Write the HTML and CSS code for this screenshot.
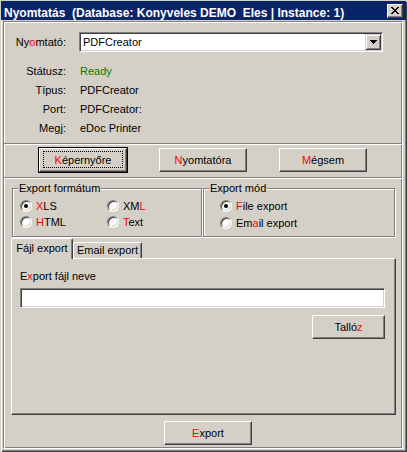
FILE: index.html
```html
<!DOCTYPE html>
<html>
<head>
<meta charset="utf-8">
<link rel="stylesheet" href="styles.css">
</head>
<body>
<div class="window">
  <div class="titlebar">
    <span class="title">Nyomtatás  (Database: Konyveles DEMO  Eles | Instance: 1)</span>
    <span class="close"><svg width="8" height="7" viewBox="0 0 8 7"><path d="M0 0h2v1H0zM6 0h2v1H6zM1 1h2v1H1zM5 1h2v1H5zM2 2h4v1H2zM3 3h2v1H3zM2 4h4v1H2zM1 5h2v1H1zM5 5h2v1H5zM0 6h2v1H0zM6 6h2v1H6z" fill="#000"/></svg></span>
  </div>
  <div class="client">
    <div class="top">
      <div class="printer-row">
        <span class="lbl">Ny<span class="u">o</span>mtató:</span>
        <div class="combo">
          <span class="combo-text">PDFCreator</span>
          <span class="dd"><svg width="7" height="4" viewBox="0 0 7 4"><path d="M0 0h7v1H0zM1 1h5v1H1zM2 2h3v1H2zM3 3h1v1H3z" fill="#000"/></svg></span>
        </div>
      </div>
      <div class="info">
        <span class="lbl">Státusz:</span><span class="ready">Ready</span>
        <span class="lbl">Típus:</span><span>PDFCreator</span>
        <span class="lbl">Port:</span><span>PDFCreator:</span>
        <span class="lbl">Megj:</span><span>eDoc Printer</span>
      </div>
    </div>
    <div class="sep"></div>
    <div class="buttons">
      <div class="btn default"><span class="u">K</span>épernyőre</div>
      <div class="btn"><span class="u">N</span>yomtatóra</div>
      <div class="btn"><span class="u">M</span>égsem</div>
    </div>
    <div class="sep"></div>
    <div class="lower">
      <div class="groups">
        <div class="group g1">
          <span class="legend">Export formátum</span>
          <div class="radios1">
            <div class="opt"><span class="radio on"></span><span><span class="u">X</span>LS</span></div>
            <div class="opt"><span class="radio"></span><span>XM<span class="u">L</span></span></div>
            <div class="opt"><span class="radio"></span><span><span class="u">H</span>TML</span></div>
            <div class="opt"><span class="radio"></span><span><span class="u">T</span>ext</span></div>
          </div>
        </div>
        <div class="group g2">
          <span class="legend">Export mód</span>
          <div class="radios2">
            <div class="opt"><span class="radio on"></span><span><span class="u">F</span>ile export</span></div>
            <div class="opt"><span class="radio"></span><span>Em<span class="u">a</span>il export</span></div>
          </div>
        </div>
      </div>
      <div class="tabrow">
        <div class="tab sel">Fájl export</div>
        <div class="tab t2">Email export</div>
      </div>
      <div class="panel">
        <div class="flabel">E<span class="u">x</span>port fájl neve</div>
        <div class="input"></div>
        <div class="btn browse">Talló<span class="u">z</span></div>
      </div>
      <div class="footer">
        <div class="btn"><span class="u">E</span>xport</div>
      </div>
    </div>
  </div>
</div>
</body>
</html>
```

FILE: styles.css
```css
* { box-sizing: border-box; }
html, body { margin: 0; padding: 0; }
body {
  width: 407px;
  height: 452px;
  overflow: hidden;
  background: #d4d0c8;
  font-family: "Liberation Sans", Arial, sans-serif;
  font-size: 11px;
  color: #000;
}
.u { color: #ff0000; }

.window {
  width: 407px;
  height: 452px;
  padding: 1px;
  background: #d4d0c8;
  box-shadow: inset 1px 1px 0 #d4d0c8, inset 2px 2px 0 #fff, inset -1px -1px 0 #404040, inset -2px -2px 0 #808080;
  display: flex;
  flex-direction: column;
}

.titlebar {
  height: 19px;
  flex: none;
  background: #0a246a;
  color: #fff;
  display: flex;
  align-items: center;
  justify-content: space-between;
  padding: 0 3px 0 3px;
}
.title {
  font-weight: bold;
  font-size: 12px;
  white-space: pre;
  padding-top: 4px;
  line-height: 14px;
}
.close {
  width: 16px;
  height: 14px;
  background: #d4d0c8;
  border: 1px solid;
  border-color: #fff #404040 #404040 #fff;
  box-shadow: inset -1px -1px 0 #808080;
  display: flex;
  align-items: center;
  justify-content: center;
}

.client {
  margin: 1px 3px 0 2px;
  height: 428px;
  flex: none;
  border: 1px solid;
  border-color: #808080 #fff #fff #808080;
  box-shadow: inset 1px 1px 0 #fff, inset -1px -1px 0 #808080;
  display: flex;
  flex-direction: column;
}

.top { padding: 10px 0 5px 0; }
.printer-row { display: flex; align-items: center; height: 20px; }
.lbl { width: 62px; text-align: right; }
.combo {
  margin-left: 13px;
  width: 304px;
  height: 20px;
  background: #fff;
  border: 1px solid;
  border-color: #808080 #fff #fff #808080;
  box-shadow: inset 1px 1px 0 #404040, inset -1px -1px 0 #d4d0c8;
  padding: 1px;
  display: flex;
  align-items: center;
}
.combo-text { flex: 1; padding-left: 2px; }
.dd {
  width: 16px;
  height: 16px;
  background: #d4d0c8;
  border: 1px solid;
  border-color: #d4d0c8 #404040 #404040 #d4d0c8;
  box-shadow: inset 1px 1px 0 #fff, inset -1px -1px 0 #808080;
  display: flex;
  align-items: center;
  justify-content: center;
}
.info {
  display: grid;
  grid-template-columns: 62px auto;
  column-gap: 14px;
  margin-top: 10px;
  line-height: 19px;
}
.ready { color: #008000; }

.sep {
  height: 2px;
  flex: none;
  border-top: 1px solid #808080;
  border-bottom: 1px solid #fff;
}

.buttons {
  height: 32px;
  flex: none;
  display: flex;
  align-items: flex-start;
  padding: 3px 0 0 35px;
}
.btn {
  width: 88px;
  height: 24px;
  flex: none;
  background: #d4d0c8;
  border: 1px solid;
  border-color: #fff #404040 #404040 #fff;
  box-shadow: inset -1px -1px 0 #808080;
  display: flex;
  align-items: center;
  justify-content: center;
  position: relative;
}
.buttons .btn + .btn { margin-left: 32px; }
.default { outline: 1px solid #000; }
.default::after {
  content: "";
  position: absolute;
  left: 3px; top: 2px; right: 3px; bottom: 3px;
  border: 1px dotted #000;
}

.groups { display: flex; margin: 9px 0 0 8px; }
.group {
  position: relative;
  height: 49px;
  border: 1px solid #808080;
  box-shadow: inset 1px 1px 0 #fff, 1px 1px 0 #fff;
}
.g1 { width: 190px; padding: 9px 0 0 7px; }
.g2 { width: 192px; margin-left: 1px; padding: 9px 0 0 16px; }
.legend {
  position: absolute;
  top: -7px;
  left: 5px;
  padding: 0 1px;
  line-height: 13px;
  background: #d4d0c8;
}
.radios1 { display: grid; grid-template-columns: 87px auto; grid-auto-rows: 16px; }
.radios2 { display: grid; grid-auto-rows: 16px; row-gap: 1px; }
.opt { display: flex; align-items: center; gap: 4px; }
.radio {
  width: 12px;
  height: 12px;
  flex: none;
  border-radius: 50%;
  background: #fff;
  border: 1px solid;
  border-color: #808080 #fff #fff #808080;
  box-shadow: inset 1px 1px 0 #404040, inset -1px -1px 0 #d4d0c8;
  position: relative;
}
.radio.on::after {
  content: "";
  position: absolute;
  left: 3px; top: 3px;
  width: 4px; height: 4px;
  border-radius: 50%;
  background: #000;
}

.tabrow {
  display: flex;
  align-items: flex-end;
  margin: 1px 0 0 7px;
  height: 20px;
  position: relative;
  z-index: 1;
}
.tab {
  height: 16px;
  border: 1px solid;
  border-bottom: none;
  border-color: #fff #404040 transparent #fff;
  box-shadow: inset -1px 0 0 #808080;
  border-radius: 2px 2px 0 0;
  text-align: center;
  line-height: 14px;
  background: #d4d0c8;
}
.tab.sel { width: 62px; height: 21px; margin-bottom: -1px; line-height: 18px; }
.tab.t2 { width: 69px; }

.panel {
  margin-left: 7px;
  width: 385px;
  height: 157px;
  flex: none;
  border: 1px solid;
  border-color: #fff #404040 #404040 #fff;
  box-shadow: inset -1px -1px 0 #808080;
  padding: 11px 10px 0 8px;
  display: flex;
  flex-direction: column;
}
.flabel { line-height: 13px; }
.input {
  margin-top: 5px;
  height: 20px;
  background: #fff;
  border: 1px solid;
  border-color: #808080 #fff #fff #808080;
  box-shadow: inset 1px 1px 0 #404040, inset -1px -1px 0 #d4d0c8;
}
.browse { margin-top: 7px; align-self: flex-end; width: 73px; }

.footer { margin: 6px 0 0 160px; display: flex; }
```
